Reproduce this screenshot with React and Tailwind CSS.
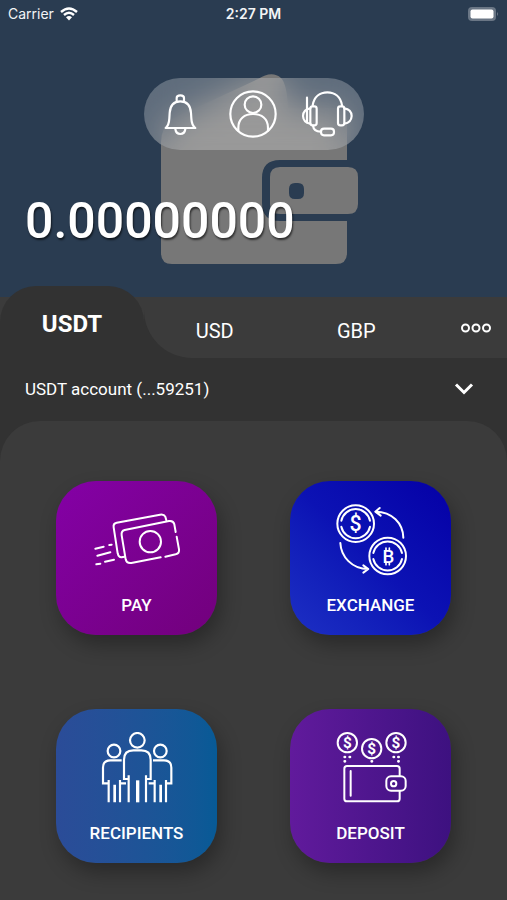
const BellIcon = () => (
  <svg
    viewBox="100 93 105 132"
    className="w-[35px] h-11"
    fill="none"
    stroke="currentColor"
    strokeWidth="6.5"
    strokeLinecap="round"
    strokeLinejoin="round"
  >
    <path d="M141 119 V111 Q141 103 152 103 Q163 103 163 111 V119" />
    <path d="M108 201 Q118 192 119 172 L120 156 Q122 121 152 121 Q182 121 184 156 L185 172 Q186 192 197 201 Z" />
    <path d="M137 204 Q139 219 152 219 Q165 219 167 204" />
  </svg>
);

const UserIcon = () => (
  <svg
    viewBox="299 90 144 144"
    className="w-12 h-12"
    fill="none"
    stroke="currentColor"
    strokeWidth="6.5"
    strokeLinecap="round"
  >
    <circle cx="371" cy="162" r="68" />
    <circle cx="371" cy="134" r="25" />
    <path d="M327 212 V203 C327 176 346 162 371 162 C397 162 416 176 416 203 V212" />
  </svg>
);

const HeadsetIcon = () => (
  <svg
    viewBox="513 90 156 144"
    className="w-[52px] h-12"
    fill="none"
    stroke="currentColor"
    strokeWidth="6.5"
    strokeLinecap="round"
    strokeLinejoin="round"
  >
    <path d="M548 136 C552 110 570 97 592 97 C614 97 632 110 636 136" />
    <rect x="541" y="139" width="19" height="57" rx="7" />
    <rect x="624" y="139" width="19" height="57" rx="7" />
    <path d="M541 145 Q520 148 519 168 Q520 188 541 191" />
    <path d="M643 145 Q664 148 665 168 Q664 188 643 191" />
    <path d="M531 113 V187" />
    <path d="M549 197 Q551 215 572 215" />
    <rect x="573" y="206" width="39" height="20" rx="9" />
  </svg>
);

const WalletBackdrop = () => (
  <svg
    viewBox="144 70 220 200"
    className="absolute inset-x-0 top-[70px] mx-auto w-[220px] h-[200px] text-[#777777]"
    fill="currentColor"
    aria-hidden="true"
  >
    <path d="M161 142 Q161 128 172 119 L258 79 Q272 70 281 78 Q287 84 288 108 H335 Q347 108 347 122 V160 H280 Q262 160 262 178 V203 Q262 221 280 221 H347 V253 Q347 264 336 264 H172 Q161 264 161 253 Z" />
    <path
      fillRule="evenodd"
      d="M280 167 H348 Q358 167 358 177 V204 Q358 214 348 214 H280 Q270 214 270 204 V177 Q270 167 280 167 Z M295 183 Q289 183 289 189 V193 Q289 199 295 199 H298 Q304 199 304 193 V189 Q304 183 298 183 Z"
    />
  </svg>
);

const PayIcon = () => (
  <svg
    viewBox="145 102 288 216"
    className="w-24 h-[72px]"
    fill="none"
    stroke="currentColor"
    strokeWidth="6"
    strokeLinecap="round"
    strokeLinejoin="round"
  >
    <path d="M360 262 L272 279 Q258 281 255 268 L243 196 Q241 183 252 180 L385 153 Q398 151 401 163 L405 186" />
    <path d="M408 200 L415 238 Q417 250 405 253 L374 260" />
    <path d="M251 260 L243 262 Q234 263 231 250 L219 172 Q217 160 228 158 L358 134 Q370 132 374 140 L377 151" />
    <circle cx="329" cy="215" r="32" />
    <path d="M164 236 L189 230 M206 225 L213 224 M170 257 L209 247 M167 283 L179 281 M193 275 L220 269" />
  </svg>
);

const ExchangeIcon = () => (
  <svg
    viewBox="158 102 288 216"
    className="w-24 h-[72px]"
    fill="none"
    stroke="currentColor"
    strokeWidth="6"
    strokeLinecap="round"
    strokeLinejoin="round"
  >
    <circle cx="256" cy="161" r="55" />
    <path d="M213 152 A44 44 0 0 1 299 152 M213 170 A44 44 0 0 0 299 170" />
    <text
      x="256"
      y="184"
      textAnchor="middle"
      className="font-['Roboto',sans-serif] text-[64px] font-medium"
      fill="currentColor"
      stroke="none"
    >
      $
    </text>
    <circle cx="352" cy="258" r="55" />
    <path d="M309 249 A44 44 0 0 1 395 249 M309 267 A44 44 0 0 0 395 267" />
    <text
      x="354"
      y="279"
      textAnchor="middle"
      className="font-['Roboto',sans-serif] text-[56px] font-medium"
      fill="currentColor"
      stroke="none"
    >
      B
    </text>
    <path
      strokeWidth="5"
      d="M347 234 V240 M357 234 V240 M347 278 V284 M357 278 V284"
    />
    <path d="M399 203 C398 160 365 125 316 125 M328 114 L315 125 L331 137" />
    <path d="M210 219 C212 260 245 297 293 297 M279 286 L294 297 L279 308" />
  </svg>
);

const RecipientsIcon = () => (
  <svg
    viewBox="145 99 288 216"
    className="w-24 h-[72px]"
    fill="none"
    stroke="currentColor"
    strokeWidth="6.5"
  >
    <circle cx="290" cy="124" r="22" />
    <circle cx="220" cy="156" r="19" />
    <circle cx="359" cy="156" r="19" />
    <path d="M264 310 V229 M264 240 H250 V182 Q250 154 278 154 H302 Q330 154 330 182 V240 H316 M316 310 V229" />
    <path strokeWidth="10" d="M291 244 V310" />
    <path d="M204 310 V243 M204 253 H187 V206 Q187 184 209 184 H243 M238 310 V243 M238 253 H256" />
    <path d="M376 310 V243 M376 253 H392 V206 Q392 184 370 184 H337 M342 310 V243 M342 253 H324" />
    <path strokeWidth="8" d="M222 257 V310 M360 257 V310" />
  </svg>
);

const COINS = [
  { x: 231, y: 131 },
  { x: 304, y: 149 },
  { x: 377, y: 131 },
];

const DepositIcon = () => (
  <svg
    viewBox="158 99 288 216"
    className="w-24 h-[72px]"
    fill="none"
    stroke="currentColor"
    strokeWidth="6"
    strokeLinecap="round"
    strokeLinejoin="round"
  >
    {COINS.map(({ x, y }) => (
      <g key={x}>
        <circle cx={x} cy={y} r="29" />
        <text
          x={x}
          y={y + 16}
          textAnchor="middle"
          className="font-['Roboto',sans-serif] text-[46px] font-bold"
          fill="currentColor"
          stroke="none"
        >
          $
        </text>
      </g>
    ))}
    <path
      strokeWidth="8"
      d="M223 174 h1 M238 174 h1 M223 187 h1 M304 187 h1 M370 174 h1 M384 174 h1 M384 187 h1"
    />
    <path d="M388 230 V209 Q388 201 380 201 H230 Q222 201 222 209 V299 Q222 307 230 307 H380 Q388 307 388 299 V277" />
    <path d="M241 216 V290" />
    <rect x="348" y="232" width="58" height="43" rx="14" />
    <circle cx="370" cy="254" r="8" />
  </svg>
);

const ACTIONS = [
  {
    label: 'PAY',
    Icon: PayIcon,
    gradient: 'bg-linear-to-br from-[#8400a6] to-[#72007c]',
  },
  {
    label: 'EXCHANGE',
    Icon: ExchangeIcon,
    gradient: 'bg-linear-to-tr from-[#1d2fc4] via-[#0c12b4] to-[#0500a6]',
  },
  {
    label: 'RECIPIENTS',
    Icon: RecipientsIcon,
    gradient: 'bg-linear-to-r from-[#2b4c98] to-[#075a96]',
  },
  {
    label: 'DEPOSIT',
    Icon: DepositIcon,
    gradient: 'bg-linear-to-r from-[#611a9c] to-[#3d1180]',
  },
];

const StatusBar = () => (
  <div className="grid grid-cols-3 items-center h-7 px-2 font-['Inter',sans-serif] text-sm text-gray-100">
    <div className="flex items-center gap-1.5">
      <span>Carrier</span>
      <svg viewBox="0 0 18 14" className="w-[18px] h-3.5" fill="none">
        <path
          d="M1 5 Q9 -2 17 5 M4 8 Q9 3.5 14 8"
          stroke="white"
          strokeWidth="2.4"
        />
        <path d="M6 10.2 Q9 7.6 12 10.2 L9 13.6 Z" fill="white" />
      </svg>
    </div>
    <span className="text-center font-semibold">2:27 PM</span>
    <svg viewBox="0 0 31 14" className="w-[31px] h-3.5 justify-self-end">
      <rect x="0" y="0" width="28" height="14" rx="4" fill="#6a7685" />
      <rect x="2.5" y="2.5" width="23" height="9" rx="2" fill="white" />
      <path d="M29 5 Q31 7 29 9 Z" fill="#6a7685" />
    </svg>
  </div>
);

const App = () => {
  return (
    <div className="flex flex-col min-h-screen bg-[#323232] font-['Roboto',sans-serif] text-white">
      {/* Balance */}
      <header className="relative bg-[#2a3c51]">
        <WalletBackdrop />
        <div className="relative">
          <StatusBar />
          <div className="grid grid-cols-3 place-items-center w-[220px] h-[72px] mx-auto mt-[50px] rounded-full bg-white/25 backdrop-blur-lg">
            <button type="button" aria-label="Notifications">
              <BellIcon />
            </button>
            <button type="button" aria-label="Profile">
              <UserIcon />
            </button>
            <button type="button" aria-label="Support">
              <HeadsetIcon />
            </button>
          </div>
          <p className="px-[25px] pt-[41px] pb-[46px] text-[50px] leading-[60px] font-medium [text-shadow:1px_2px_2px_rgba(0,0,0,0.6)]">
            0.00000000
          </p>
        </div>
      </header>

      {/* Currencies */}
      <nav className="flex bg-[#3b3b3b]">
        <button
          type="button"
          className="relative w-36 -mt-[11px] pt-1 h-[72px] rounded-t-[36px] bg-[#323232] text-2xl font-bold"
        >
          USDT
        </button>
        <div className="flex-1 bg-[#323232]">
          <div className="flex h-[61px] rounded-bl-[48px] bg-[#3b3b3b] text-xl">
            <button type="button" className="flex-1 pt-1.5">
              USD
            </button>
            <button type="button" className="flex-1 pt-1.5">
              GBP
            </button>
            <button
              type="button"
              aria-label="More currencies"
              className="flex items-center justify-end w-20 pr-[15px]"
            >
              <svg
                viewBox="0 0 32 10"
                className="w-8 h-2.5"
                fill="none"
                stroke="currentColor"
                strokeWidth="2"
              >
                <circle cx="5.5" cy="5" r="3.5" />
                <circle cx="16" cy="5" r="3.5" />
                <circle cx="26.5" cy="5" r="3.5" />
              </svg>
            </button>
          </div>
        </div>
      </nav>

      <div className="relative">
        <select
          aria-label="Account"
          className="w-full h-[63px] px-[25px] appearance-none bg-transparent text-[17px]"
        >
          <option>USDT account (...59251)</option>
        </select>
        <svg
          viewBox="0 0 20 14"
          className="absolute right-[33px] top-6 w-5 h-3.5 pointer-events-none"
          fill="none"
          stroke="currentColor"
          strokeWidth="3"
        >
          <path d="M2 2.5 L10 10.5 L18 2.5" />
        </svg>
      </div>

      {/* Actions */}
      <main className="flex-1 px-14 pt-[60px] pb-9 rounded-t-[40px] bg-[#3b3b3b]">
        <div className="grid grid-cols-2 gap-x-[73px] gap-y-[74px]">
          {ACTIONS.map(({ label, Icon, gradient }) => (
            <button
              key={label}
              type="button"
              className={`flex flex-col items-center pt-[23px] pb-[18px] rounded-[40px] shadow-[4px_10px_20px_rgba(0,0,0,0.3)] ${gradient}`}
            >
              <Icon />
              <span className="mt-[17px] text-[17px] leading-6 font-medium">
                {label}
              </span>
            </button>
          ))}
        </div>
      </main>
    </div>
  );
};

export default App;
